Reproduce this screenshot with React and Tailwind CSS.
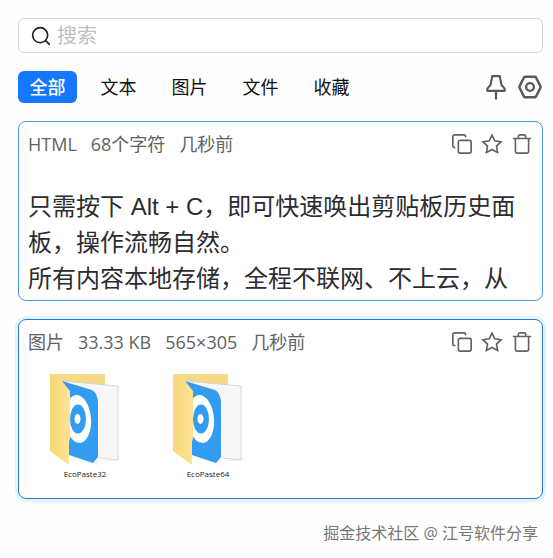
import { useState } from "react";

const tabs = ["全部", "文本", "图片", "文件", "收藏"];

function Icon({ children, className = "size-[22px]", strokeWidth = 1.8 }) {
  return (
    <svg
      viewBox="0 0 24 24"
      fill="none"
      stroke="currentColor"
      strokeWidth={strokeWidth}
      strokeLinecap="round"
      strokeLinejoin="round"
      className={className}
      aria-hidden="true"
    >
      {children}
    </svg>
  );
}

function IconButton({ label, children }) {
  return (
    <button type="button" aria-label={label} className="block shrink-0">
      {children}
    </button>
  );
}

function CardHeader({ items }) {
  return (
    <header className="flex items-center justify-between text-[#626262]">
      <div className="flex gap-[14px] text-lg leading-6">
        {items.map((item) => (
          <span key={item}>{item}</span>
        ))}
      </div>
      <div className="flex gap-2">
        <IconButton label="复制">
          <Icon>
            <rect x="8" y="8" width="14" height="14" rx="2" />
            <path d="M4 16c-1.1 0-2-.9-2-2V4c0-1.1.9-2 2-2h10c1.1 0 2 .9 2 2" />
          </Icon>
        </IconButton>
        <IconButton label="收藏">
          <Icon>
            <path
              strokeLinejoin="miter"
              d="M12 2.3l3 6.2 6.900 1-5 4.800 1.200 6.900-6.100-3.300-6.100 3.300 1.200-6.900-5-4.800 6.900-1z"
            />
          </Icon>
        </IconButton>
        <IconButton label="删除">
          <Icon>
            <path d="M2.8 6h18.4M4.8 6v14.2c0 1 .8 1.800 1.800 1.800h10.800c1 0 1.800-.8 1.800-1.800V6M8 6V3.600C8 2.700 8.700 2 9.600 2h4.800c.9 0 1.600.7 1.600 1.600V6" />
          </Icon>
        </IconButton>
      </div>
    </header>
  );
}

function Folder({ name, id }) {
  return (
    <figure className="flex w-[70px] flex-col items-center">
      <svg viewBox="0 0 76 94" className="h-[94px] w-[76px] shrink-0 self-start overflow-visible" aria-hidden="true">
        <defs>
          <linearGradient id={`${id}-front`} x1="0" y1="0" x2="1" y2="0">
            <stop offset="0" stopColor="#f9d779" />
            <stop offset="1" stopColor="#ffe394" />
          </linearGradient>
          <linearGradient id={`${id}-shade`} x1="0" y1="0" x2="1" y2="0">
            <stop offset="0" stopColor="#d9d9d9" />
            <stop offset="1" stopColor="#ffffff" />
          </linearGradient>
          <clipPath id={`${id}-clip`}>
            <path d="M20 12V79l23 9 5-6V29c0-3-1-6-4-8z" />
          </clipPath>
        </defs>
        <path d="M48 86h20v-4l6 2-6 3z" fill={`url(#${id}-shade)`} />
        <path d="M0 0h55v20H0z" fill="#f6d98b" />
        <path d="M12 7l56 5v74l-19-2-1 8-28-10z" fill="#f7f7f7" />
        <path d="M12 7l56 5v74l-18-2" fill="none" stroke="#d0d0d0" strokeWidth=".8" />
        <path d="M12 7l30 9c4 2 6 8 6 13v54l-5 6-24-8V20z" fill="#329df0" />
        <g clipPath={`url(#${id}-clip)`}>
          <ellipse cx="28" cy="45" rx="13" ry="24" fill="#fff" transform="rotate(-5 28 45)" />
          <ellipse cx="28" cy="45" rx="8" ry="14.500" fill="#329df0" />
          <ellipse cx="27.500" cy="45" rx="3" ry="5" fill="#fff" />
        </g>
        <path d="M0 0l12 7 8 10v47l-1 4v23L0 77z" fill={`url(#${id}-front)`} />
      </svg>
      <figcaption className="font-['Open_Sans','Noto_Sans',sans-serif] text-[8px] leading-3 text-[#222]">{name}</figcaption>
    </figure>
  );
}

export default function App() {
  const [active, setActive] = useState("全部");

  return (
    <main className="flex min-h-screen flex-col gap-[18px] bg-[#fefefe] pt-[18px] pr-[10px] pl-[18px] font-['Open_Sans','Noto_Sans_CJK_SC',sans-serif] text-[#222]">
      <label className="flex h-[35px] items-center gap-1.5 rounded-md border border-[#d4d4d4] bg-white px-3">
        <Icon className="size-5 shrink-0" strokeWidth={2}>
          <circle cx="11" cy="11" r="9" />
          <path d="M17.500 17.500L22 22" />
        </Icon>
        <input
          type="search"
          aria-label="搜索"
          placeholder="搜索"
          className="min-w-0 flex-1 bg-transparent text-xl leading-8 outline-none placeholder:text-[#bfbfbf]"
        />
      </label>

      <div className="flex items-center justify-between">
        <nav className="flex gap-3">
          {tabs.map((tab) => (
            <button
              key={tab}
              type="button"
              onClick={() => setActive(tab)}
              className={`flex h-8 w-[59px] items-center justify-center rounded-md text-lg whitespace-nowrap ${
                active === tab ? "bg-[#1677ff] font-medium text-white" : "text-[#111]"
              }`}
            >
              {tab}
            </button>
          ))}
        </nav>
        <div className="flex gap-2 text-[#595959]">
          <IconButton label="固定窗口">
            <Icon className="size-[26px]" strokeWidth={2}>
              <path strokeLinecap="butt" d="M8.500 2h7l1.500 8 3 3.500v2H4v-2L7 10zM12 15.500v8" />
            </Icon>
          </IconButton>
          <IconButton label="设置">
            <Icon className="size-[26px]" strokeWidth={2.2}>
              <path d="M7.500 2.500h9c.4 0 .8.200 1 .6l4.200 8.300c.2.400.2.800 0 1.200l-4.200 8.300c-.2.400-.6.600-1 .6h-9c-.4 0-.8-.2-1-.6l-4.200-8.300c-.2-.4-.2-.8 0-1.200l4.200-8.300c.2-.4.6-.6 1-.6z" />
              <circle cx="12" cy="12" r="3.600" />
            </Icon>
          </IconButton>
        </div>
      </div>

      <article className="h-[180px] overflow-hidden rounded-lg border border-[#4b93e3] bg-white px-[9px] pt-[10px]">
        <CardHeader items={["HTML", "68个字符", "几秒前"]} />
        <div className="pt-[33px] font-['Liberation_Sans','Noto_Sans_CJK_SC',sans-serif] text-2xl leading-9 text-[#2c2c30]">
          <p>只需按下 Alt + C，即可快速唤出剪贴板历史面板，操作流畅自然。</p>
          <p>所有内容本地存储，全程不联网、不上云，从</p>
        </div>
      </article>

      <article className="h-[180px] overflow-hidden rounded-lg border border-[#2f74d8] bg-white px-[9px] pt-[10px] shadow-[0_0_0_3px_#e2f5ff]">
        <CardHeader items={["图片", "33.33 KB", "565×305", "几秒前"]} />
        <div className="flex gap-[53px] pt-5 pl-[22px]">
          <Folder name="EcoPaste32" id="folder32" />
          <Folder name="EcoPaste64" id="folder64" />
        </div>
      </article>

      <footer className="self-end pt-1 pr-[5px] text-base leading-6 text-[#777]">掘金技术社区 @ 江号软件分享</footer>
    </main>
  );
}
